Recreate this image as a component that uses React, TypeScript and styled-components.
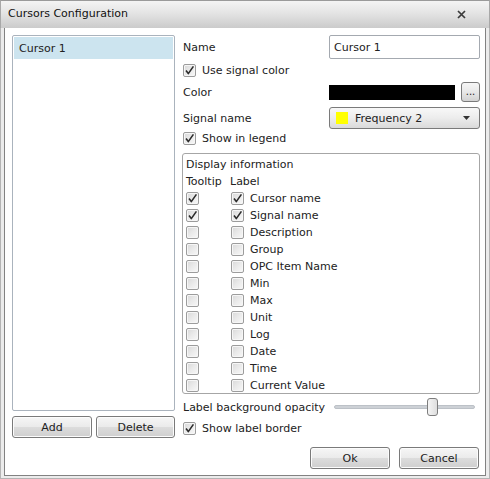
import React from "react";
import styled, { createGlobalStyle } from "styled-components";

const GlobalStyle = createGlobalStyle`
  html, body {
    margin: 0;
    padding: 0;
    background: #ececec;
  }
  * {
    box-sizing: border-box;
  }
`;

const displayItems = [
  { name: "Cursor name", tooltip: true, label: true },
  { name: "Signal name", tooltip: true, label: true },
  { name: "Description" },
  { name: "Group" },
  { name: "OPC Item Name" },
  { name: "Min" },
  { name: "Max" },
  { name: "Unit" },
  { name: "Log" },
  { name: "Date" },
  { name: "Time" },
  { name: "Current Value" },
];

const CheckBox = ({ checked }: { checked?: boolean }) => (
  <Box>
    {checked && (
      <svg width="11" height="11" viewBox="0 0 11 11">
        <path
          d="M2 5.6 L4.3 8.6 L9.4 1.4"
          fill="none"
          stroke="#2b2b2b"
          strokeWidth="1.6"
          strokeLinejoin="round"
        />
      </svg>
    )}
  </Box>
);

const App = () => {
  return (
    <Window>
      <GlobalStyle />
      <TitleBar>
        <span>Cursors Configuration</span>
        <CloseIcon width="9" height="9" viewBox="0 0 9 9">
          <path d="M1 1 L8 8 M8 1 L1 8" stroke="#3a3a3a" strokeWidth="1.7" />
        </CloseIcon>
      </TitleBar>
      <Frame>
        <Body>
          <LeftColumn>
            <List>
              <ListItem $selected>Cursor 1</ListItem>
            </List>
            <ButtonRow>
              <Button $width={80}>Add</Button>
              <Button $width={79}>Delete</Button>
            </ButtonRow>
          </LeftColumn>

          <RightColumn>
            <FieldRow $height={24}>
              <Label>Name</Label>
              <TextInput>Cursor 1</TextInput>
            </FieldRow>
            <CheckRow $height={23}>
              <CheckBox checked />
              <span>Use signal color</span>
            </CheckRow>
            <FieldRow $height={20}>
              <Label>Color</Label>
              <ColorBar />
              <SmallButton>...</SmallButton>
            </FieldRow>
            <FieldRow $height={22} $top={5}>
              <Label>Signal name</Label>
              <Combo>
                <Swatch />
                <ComboText>Frequency 2</ComboText>
                <svg width="7" height="4" viewBox="0 0 7 4">
                  <path d="M0 0 H7 L3.5 4 Z" fill="#333" />
                </svg>
              </Combo>
            </FieldRow>
            <CheckRow $height={19}>
              <CheckBox checked />
              <span>Show in legend</span>
            </CheckRow>

            <GroupBox>
              <GroupLine>Display information</GroupLine>
              <GroupLine>
                <ColHead>Tooltip</ColHead>
                <span>Label</span>
              </GroupLine>
              {displayItems.map((item) => (
                <InfoRow key={item.name}>
                  <TooltipCell>
                    <CheckBox checked={item.tooltip} />
                  </TooltipCell>
                  <CheckBox checked={item.label} />
                  <span>{item.name}</span>
                </InfoRow>
              ))}
            </GroupBox>

            <FieldRow $height={22} $top={2}>
              <Label $width={152}>Label background opacity</Label>
              <Slider>
                <Track />
                <Thumb style={{ left: 93 }} />
              </Slider>
            </FieldRow>
            <CheckRow $height={21}>
              <CheckBox checked />
              <span>Show label border</span>
            </CheckRow>
            <DialogButtons>
              <Button $width={80}>Ok</Button>
              <Button $width={80}>Cancel</Button>
            </DialogButtons>
          </RightColumn>
        </Body>
      </Frame>
    </Window>
  );
};

export default App;

const Window = styled.div`
  width: 490px;
  height: 479px;
  display: flex;
  flex-direction: column;
  background: #ececec;
  font-family: "DejaVu Sans", Verdana, sans-serif;
  font-size: 11px;
  color: #222;
  overflow: hidden;
`;

const TitleBar = styled.div`
  height: 28px;
  flex-shrink: 0;
  display: flex;
  align-items: center;
  justify-content: space-between;
  padding: 0 23px 2px 7px;
  background: linear-gradient(#f4f4f4 0%, #e4e4e4 45%, #cbcbcb 100%);
  border-top: 1px solid #9a9a9a;
  border-left: 1px solid #a8a8a8;
  border-right: 1px solid #a8a8a8;
  font-size: 11px;
  color: #111;
`;

const CloseIcon = styled.svg`
  margin-top: 1px;
`;

const Frame = styled.div`
  flex: 1;
  display: flex;
  padding: 0 3px 2px 3px;
  background: #ececec;
  border-left: 1px solid #b4b4b4;
  border-right: 1px solid #b4b4b4;
  border-bottom: 1px solid #b4b4b4;
`;

const Body = styled.div`
  flex: 1;
  display: flex;
  align-items: flex-start;
  gap: 7px;
  padding: 7px 5px 0 7px;
  background: #fff;
  border: 1px solid #828282;
  border-top: none;
`;

const LeftColumn = styled.div`
  width: 163px;
  display: flex;
  flex-direction: column;
  gap: 5px;
`;

const List = styled.div`
  height: 376px;
  border: 1px solid #aab3bd;
  border-radius: 2px;
  padding: 1px;
`;

const ListItem = styled.div<{ $selected?: boolean }>`
  height: 22px;
  display: flex;
  align-items: center;
  padding-left: 5px;
  background: ${(p) => (p.$selected ? "#cce4ef" : "transparent")};
`;

const ButtonRow = styled.div`
  display: flex;
  gap: 4px;
`;

const Button = styled.div<{ $width: number }>`
  width: ${(p) => p.$width}px;
  height: 22px;
  display: flex;
  align-items: center;
  justify-content: center;
  border: 1px solid #7a7a7a;
  border-radius: 3px;
  background: linear-gradient(#f6f6f6 0%, #ebebeb 48%, #dcdcdc 52%, #cfcfcf 100%);
  box-shadow: inset 0 0 0 1px #fcfcfc;
`;

const RightColumn = styled.div`
  flex: 1;
  display: flex;
  flex-direction: column;
`;

const FieldRow = styled.div<{ $height: number; $top?: number }>`
  height: ${(p) => p.$height}px;
  margin-top: ${(p) => p.$top || 0}px;
  display: flex;
  align-items: center;
`;

const Label = styled.span<{ $width?: number }>`
  width: ${(p) => p.$width || 147}px;
  padding-left: 1px;
  flex-shrink: 0;
`;

const TextInput = styled.div`
  flex: 1;
  height: 24px;
  display: flex;
  align-items: center;
  padding-left: 4px;
  border: 1px solid #a4a9b0;
  border-radius: 2px;
`;

const ColorBar = styled.div`
  width: 126px;
  height: 15px;
  background: #000;
`;

const SmallButton = styled.div`
  width: 19px;
  height: 20px;
  margin-left: 6px;
  display: flex;
  align-items: flex-end;
  justify-content: center;
  padding-bottom: 4px;
  font-size: 10px;
  line-height: 1;
  border: 1px solid #7a7a7a;
  border-radius: 3px;
  background: linear-gradient(#f6f6f6 0%, #e8e8e8 50%, #d2d2d2 100%);
`;

const Combo = styled.div`
  flex: 1;
  height: 22px;
  display: flex;
  align-items: center;
  padding: 0 9px 0 6px;
  border: 1px solid #7a7a7a;
  border-radius: 3px;
  background: linear-gradient(#f8f8f8 0%, #ececec 50%, #dadada 100%);
`;

const Swatch = styled.div`
  width: 12px;
  height: 12px;
  background: #ffff00;
`;

const ComboText = styled.span`
  flex: 1;
  padding-left: 7px;
`;

const CheckRow = styled.div<{ $height: number }>`
  height: ${(p) => p.$height}px;
  display: flex;
  align-items: center;
  gap: 6px;
  padding-left: 1px;
`;

const Box = styled.div`
  width: 13px;
  height: 13px;
  flex-shrink: 0;
  display: flex;
  align-items: center;
  justify-content: center;
  border: 1px solid #9c9c9c;
  border-radius: 2px;
  background: linear-gradient(135deg, #d8d8d8 0%, #eaeaea 50%, #f8f8f8 100%);
  box-shadow: inset 0 0 0 1px #f6f6f6;
`;

const GroupBox = styled.div`
  height: 241px;
  margin-top: 5px;
  padding: 2px 3px 0 3px;
  border: 1px solid #a6a6a6;
  border-radius: 3px;
`;

const GroupLine = styled.div`
  height: 17px;
  display: flex;
  align-items: center;
`;

const ColHead = styled.span`
  width: 44px;
`;

const InfoRow = styled.div`
  height: 17px;
  display: flex;
  align-items: center;
  gap: 6px;
`;

const TooltipCell = styled.div`
  width: 39px;
`;

const Slider = styled.div`
  position: relative;
  flex: 1;
  height: 22px;
  margin-right: 5px;
`;

const Track = styled.div`
  position: absolute;
  left: 0;
  right: 0;
  top: 9px;
  height: 4px;
  border-radius: 2px;
  background: #cdd1d6;
  border: 1px solid #bcc1c7;
`;

const Thumb = styled.div`
  position: absolute;
  top: 2px;
  width: 11px;
  height: 18px;
  border: 1px solid #7d7d7d;
  border-radius: 3px;
  background: linear-gradient(90deg, #f4f4f4, #dedede);
`;

const DialogButtons = styled.div`
  display: flex;
  justify-content: flex-end;
  gap: 9px;
  margin-top: 8px;
  padding-right: 1px;
`;
